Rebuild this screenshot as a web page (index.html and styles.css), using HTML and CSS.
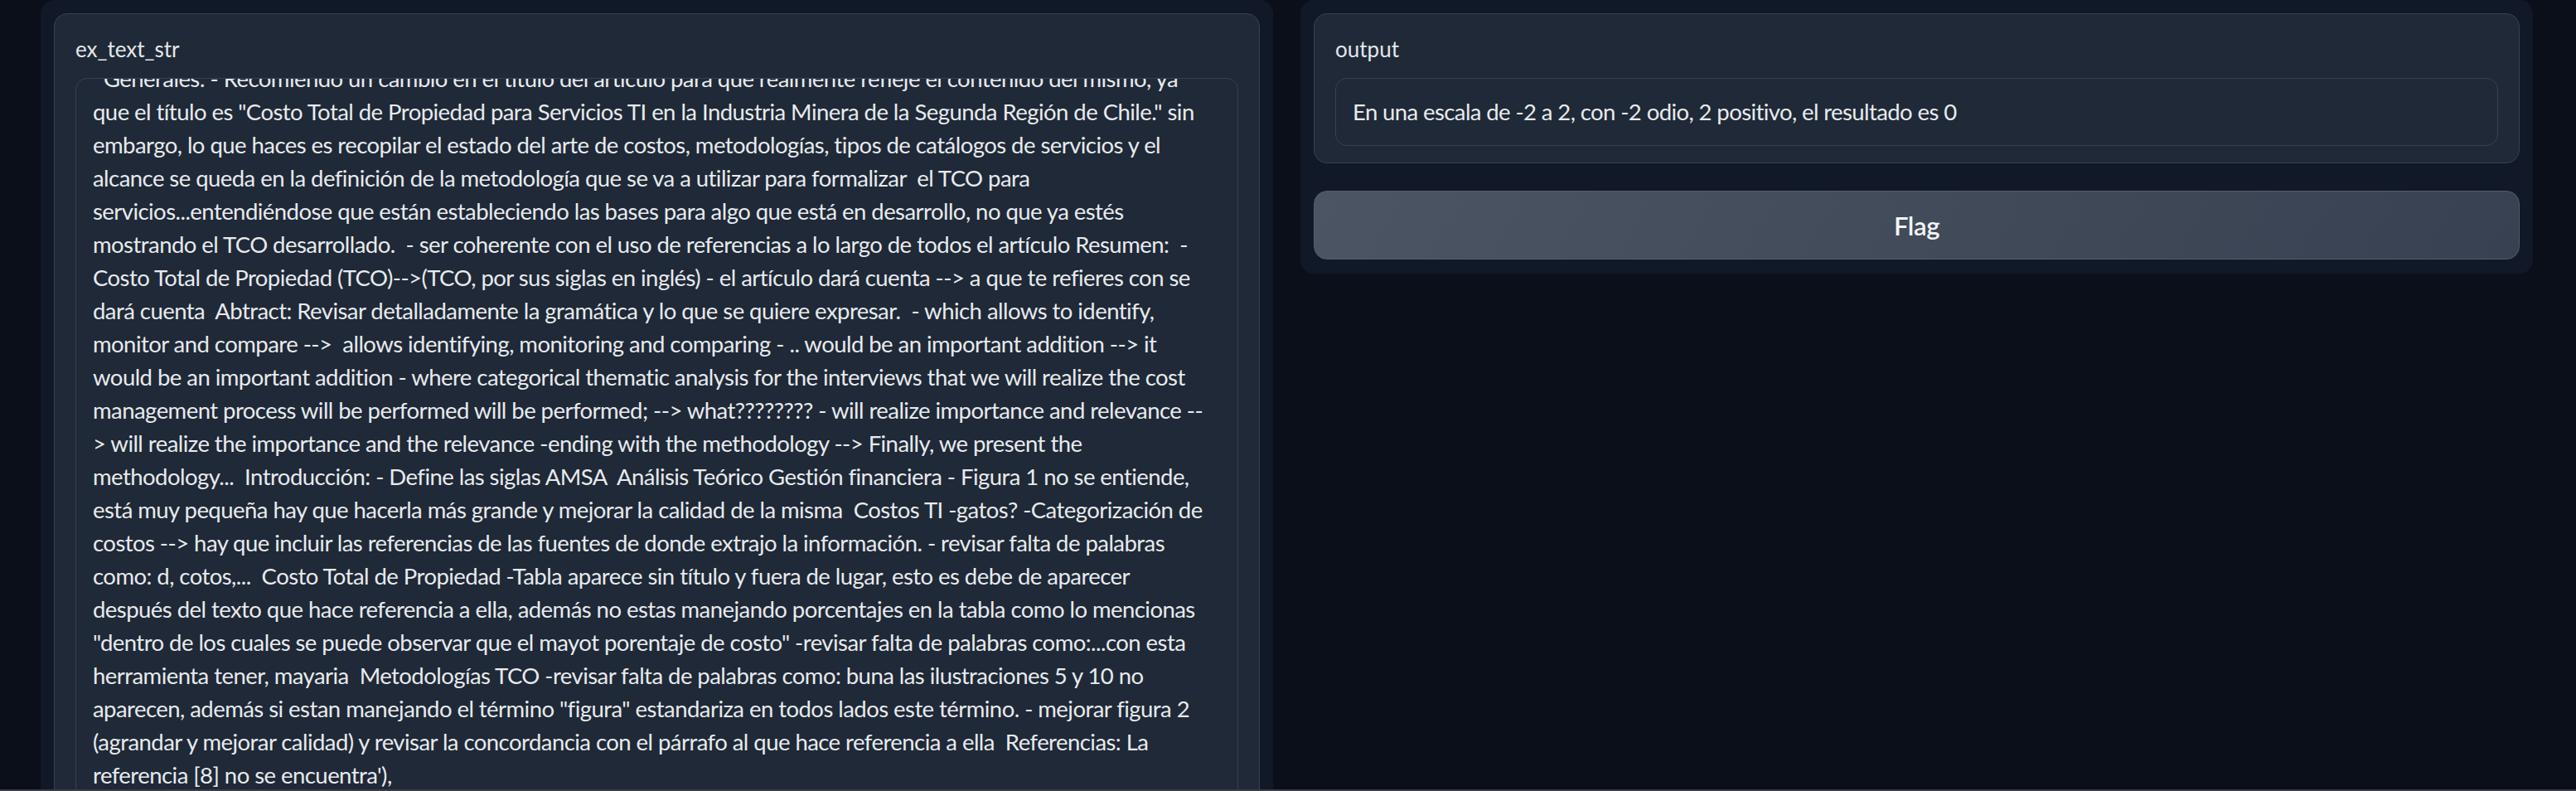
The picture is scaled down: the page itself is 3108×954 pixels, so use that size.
FILE: index.html
```html
<!DOCTYPE html>
<html lang="es">
<head>
<meta charset="utf-8">
<title>ex_text_str</title>
<link rel="stylesheet" href="styles.css">
</head>
<body>
<main class="app">
  <section class="panel panel-left">
    <div class="block block-input">
      <label class="block-label">ex_text_str</label>
      <div class="textarea">
        <div class="textarea-content">
          <div class="line">  Generales: - Recomiendo un cambio en el título del artículo para que realmente refleje el contenido del mismo, ya</div>
          <div class="line">que el título es "Costo Total de Propiedad para Servicios TI en la Industria Minera de la Segunda Región de Chile." sin</div>
          <div class="line">embargo, lo que haces es recopilar el estado del arte de costos, metodologías, tipos de catálogos de servicios y el</div>
          <div class="line">alcance se queda en la definición de la metodología que se va a utilizar para formalizar  el TCO para</div>
          <div class="line">servicios...entendiéndose que están estableciendo las bases para algo que está en desarrollo, no que ya estés</div>
          <div class="line">mostrando el TCO desarrollado.  - ser coherente con el uso de referencias a lo largo de todos el artículo Resumen:  -</div>
          <div class="line">Costo Total de Propiedad (TCO)--&gt;(TCO, por sus siglas en inglés) - el artículo dará cuenta --&gt; a que te refieres con se</div>
          <div class="line">dará cuenta  Abtract: Revisar detalladamente la gramática y lo que se quiere expresar.  - which allows to identify,</div>
          <div class="line">monitor and compare --&gt;  allows identifying, monitoring and comparing - .. would be an important addition --&gt; it</div>
          <div class="line">would be an important addition - where categorical thematic analysis for the interviews that we will realize the cost</div>
          <div class="line">management process will be performed will be performed; --&gt; what???????? - will realize importance and relevance --</div>
          <div class="line">&gt; will realize the importance and the relevance -ending with the methodology --&gt; Finally, we present the</div>
          <div class="line">methodology...  Introducción: - Define las siglas AMSA  Análisis Teórico Gestión financiera - Figura 1 no se entiende,</div>
          <div class="line">está muy pequeña hay que hacerla más grande y mejorar la calidad de la misma  Costos TI -gatos? -Categorización de</div>
          <div class="line">costos --&gt; hay que incluir las referencias de las fuentes de donde extrajo la información. - revisar falta de palabras</div>
          <div class="line">como: d, cotos,...  Costo Total de Propiedad -Tabla aparece sin título y fuera de lugar, esto es debe de aparecer</div>
          <div class="line">después del texto que hace referencia a ella, además no estas manejando porcentajes en la tabla como lo mencionas</div>
          <div class="line">"dentro de los cuales se puede observar que el mayot porentaje de costo" -revisar falta de palabras como:...con esta</div>
          <div class="line">herramienta tener, mayaria  Metodologías TCO -revisar falta de palabras como: buna las ilustraciones 5 y 10 no</div>
          <div class="line">aparecen, además si estan manejando el término "figura" estandariza en todos lados este término. - mejorar figura 2</div>
          <div class="line">(agrandar y mejorar calidad) y revisar la concordancia con el párrafo al que hace referencia a ella  Referencias: La</div>
          <div class="line">referencia [8] no se encuentra'),</div>
        </div>
      </div>
    </div>
  </section>
  <section class="panel panel-right">
    <div class="block block-output">
      <label class="block-label">output</label>
      <div class="textbox">En una escala de -2 a 2, con -2 odio, 2 positivo, el resultado es 0</div>
    </div>
    <button class="flag-button" type="button">Flag</button>
  </section>
</main>
<div class="bottom-bar"></div>
</body>
</html>
```
FILE: styles.css
```css
html, body {
  margin: 0;
  padding: 0;
  height: 100%;
  overflow: hidden;
  background: #0b0f19;
}

body {
  font-family: "Lato", "Noto Sans", sans-serif;
  color: #e5e7eb;
}

.app {
  display: grid;
  grid-template-columns: 1fr 1fr;
  column-gap: 33px;
  padding: 0 52px 0 49px;
  align-items: start;
}

.panel {
  background: #111827;
  border-radius: 16px;
  padding: 16px;
  display: flex;
  flex-direction: column;
}

.panel-left {
  padding-bottom: 0;
}

.panel-right {
  gap: 33px;
  padding-bottom: 17px;
}

.block {
  background: #1f2937;
  border: 1.5px solid #374151;
  border-radius: 16px;
  padding: 24px 25px 20px;
  display: flex;
  flex-direction: column;
}

.block-input {
  height: 1100px;
}

.block-label {
  font-size: 26px;
  line-height: 36px;
  color: #e5e7eb;
  margin-bottom: 17px;
}

.textarea {
  background: #1f2937;
  border: 1.5px solid #374151;
  border-radius: 14px;
  padding: 20px;
  height: 980px;
  overflow: hidden;
}

.textarea-content {
  margin-top: -40px;
}

.line {
  font-size: 27.5px;
  line-height: 40px;
  white-space: pre;
  letter-spacing: -0.55px;
  color: #e8eaee;
}

.textbox {
  background: #1f2937;
  border: 1.5px solid #374151;
  border-radius: 14px;
  padding: 20px 20px;
  font-size: 27.5px;
  line-height: 40px;
  letter-spacing: -0.6px;
  color: #e8eaee;
}

.flag-button {
  height: 83px;
  border: 1.5px solid #555c68;
  border-radius: 16px;
  background: linear-gradient(120deg, #4b5563, #374151);
  color: #f3f4f6;
  font-family: "Lato", "Noto Sans", sans-serif;
  font-size: 31px;
  font-weight: 600;
  letter-spacing: -0.4px;
  cursor: pointer;
}

.bottom-bar {
  position: fixed;
  left: 0;
  right: 0;
  bottom: 0;
  height: 2px;
  background: #3a3d44;
}
```
